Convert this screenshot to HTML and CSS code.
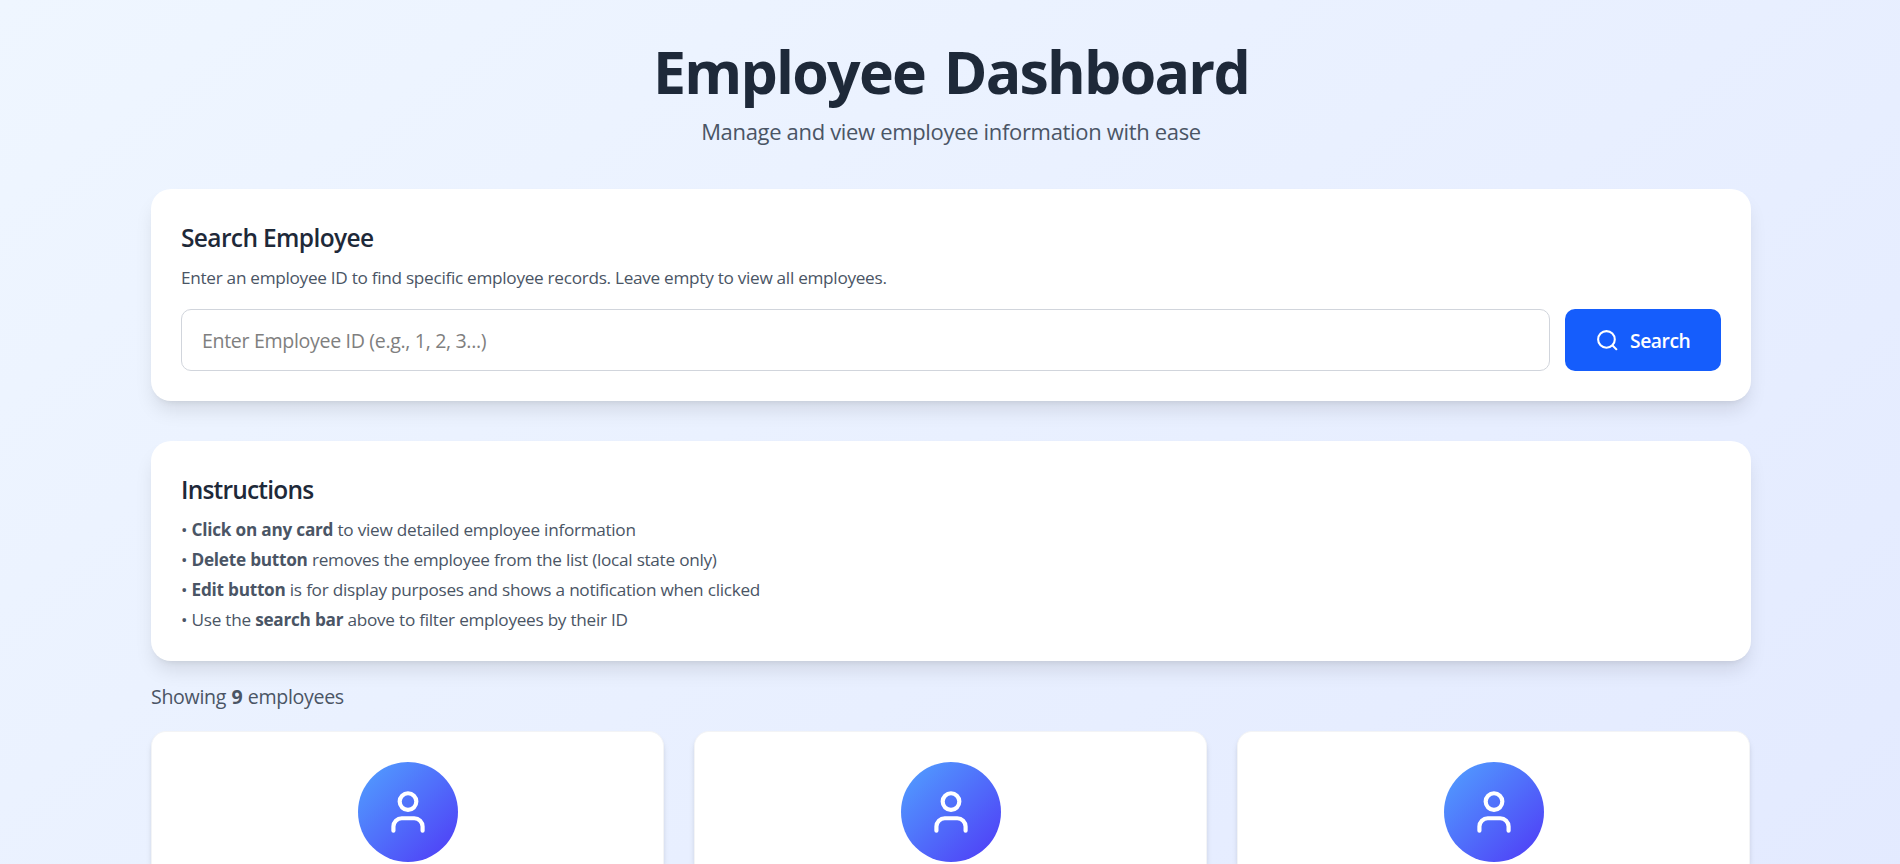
FILE: index.html
```
<!DOCTYPE html>
<html lang="en">
<head>
<meta charset="utf-8">
<title>Employee Dashboard</title>
<link rel="stylesheet" href="styles.css">
</head>
<body>
<main class="page">
  <header class="header">
    <h1 class="title">Employee Dashboard</h1>
    <p class="subtitle">Manage and view employee information with ease</p>
  </header>
  <section class="panel">
    <h2 class="heading">Search Employee</h2>
    <p class="hint">Enter an employee ID to find specific employee records. Leave empty to view all employees.</p>
    <form class="search">
      <input class="field" type="text" placeholder="Enter Employee ID (e.g., 1, 2, 3...)">
      <button class="button" type="button">
        <svg class="search-icon" viewBox="0 0 24 24"><circle cx="11" cy="11" r="8"/><path d="m21 21-4.35-4.35"/></svg>
        <span>Search</span>
      </button>
    </form>
  </section>
  <section class="panel">
    <h2 class="heading instructions-heading">Instructions</h2>
    <div class="steps">
      <p>• <strong>Click on any card</strong> to view detailed employee information</p>
      <p>• <strong>Delete button</strong> removes the employee from the list (local state only)</p>
      <p>• <strong>Edit button</strong> is for display purposes and shows a notification when clicked</p>
      <p>• Use the <strong>search bar</strong> above to filter employees by their ID</p>
    </div>
  </section>
  <p class="count">Showing <strong>9</strong> employees</p>
  <div class="grid">
    <article class="card"><div class="avatar"><svg class="user-icon" viewBox="0 0 24 24"><path d="M19 21v-2a4 4 0 0 0-4-4H9a4 4 0 0 0-4 4v2"/><circle cx="12" cy="7" r="4"/></svg></div></article>
    <article class="card"><div class="avatar"><svg class="user-icon" viewBox="0 0 24 24"><path d="M19 21v-2a4 4 0 0 0-4-4H9a4 4 0 0 0-4 4v2"/><circle cx="12" cy="7" r="4"/></svg></div></article>
    <article class="card"><div class="avatar"><svg class="user-icon" viewBox="0 0 24 24"><path d="M19 21v-2a4 4 0 0 0-4-4H9a4 4 0 0 0-4 4v2"/><circle cx="12" cy="7" r="4"/></svg></div></article>
  </div>
</main>
</body>
</html>
```
FILE: styles.css
```
*{box-sizing:border-box;margin:0;padding:0}
body{height:864px;overflow:hidden;font-family:"Segoe UI","Open Sans","Noto Sans",sans-serif;color:#4a5565;background:linear-gradient(to bottom right,#eff6ff,#e0e7ff) 0 0/1900px 1500px no-repeat}
.page{width:1600px;height:864px;overflow:visible;margin:0 0 0 151px;padding-top:41px;display:flex;flex-direction:column}
.header{text-align:center;margin-bottom:40px}
.title{font-size:59px;line-height:60px;font-weight:700;letter-spacing:-1.75px;word-spacing:5px;color:#1e2939;margin-bottom:13px}
.subtitle{font-size:22px;line-height:35px;letter-spacing:-.33px}
.panel{background:#fff;border-radius:20px;padding:30px;margin-bottom:40px;box-shadow:0 12.5px 18.75px -3.75px rgba(0,0,0,.1),0 5px 7.5px -5px rgba(0,0,0,.1)}
.heading{font-size:24.5px;line-height:37px;font-weight:600;letter-spacing:-.63px;color:#1e2939;margin-bottom:9px}
.instructions-heading{letter-spacing:-.8px}
.hint{font-size:17.2px;line-height:25px;letter-spacing:-.29px;margin-bottom:19px}
.search{display:flex;gap:15px}
.field{flex:1;min-width:0;height:62px;border:1px solid #d1d5dc;border-radius:10px;padding:0 20px;font:400 19.6px "Segoe UI","Open Sans",sans-serif;letter-spacing:-.34px;background:#fff}
.field::placeholder{color:#7f7f7f;opacity:1}
.button{width:156px;height:62px;border:0;border-radius:10px;background:#155dfc;color:#fff;display:flex;align-items:center;gap:10px;padding:0 30px;font:600 19.3px "Segoe UI","Open Sans",sans-serif;letter-spacing:-.45px}
.search-icon{width:25px;height:25px;flex:none;fill:none;stroke:#fff;stroke-width:2}
.steps{display:grid;gap:5px;font-size:17.2px;line-height:25px;letter-spacing:-.3px;word-spacing:.2px}
.steps strong{letter-spacing:-.27px}
.panel + .panel{padding-bottom:29px;margin-bottom:21px}
.count{font-size:19.6px;line-height:30px;letter-spacing:-.32px;word-spacing:.6px;margin-bottom:19px}
.grid{flex:1;min-height:0;display:grid;grid-template-columns:repeat(3,1fr);gap:30px;margin-right:1px}
.card{height:100%;background:#fff;border:1px solid #f3f4f6;border-bottom:0;border-radius:15px 15px 0 0;padding-top:30px;display:flex;justify-content:center;align-items:flex-start;box-shadow:0 5px 7.5px -1.25px rgba(0,0,0,.1),0 2.5px 5px -2.5px rgba(0,0,0,.1)}
.avatar{width:100px;height:100px;border-radius:50%;background:linear-gradient(135deg,#51a2ff,#4f39f6);display:flex;align-items:center;justify-content:center}
.user-icon{width:50px;height:50px;fill:none;stroke:#fff;stroke-width:2;stroke-linecap:round;stroke-linejoin:round}
```
